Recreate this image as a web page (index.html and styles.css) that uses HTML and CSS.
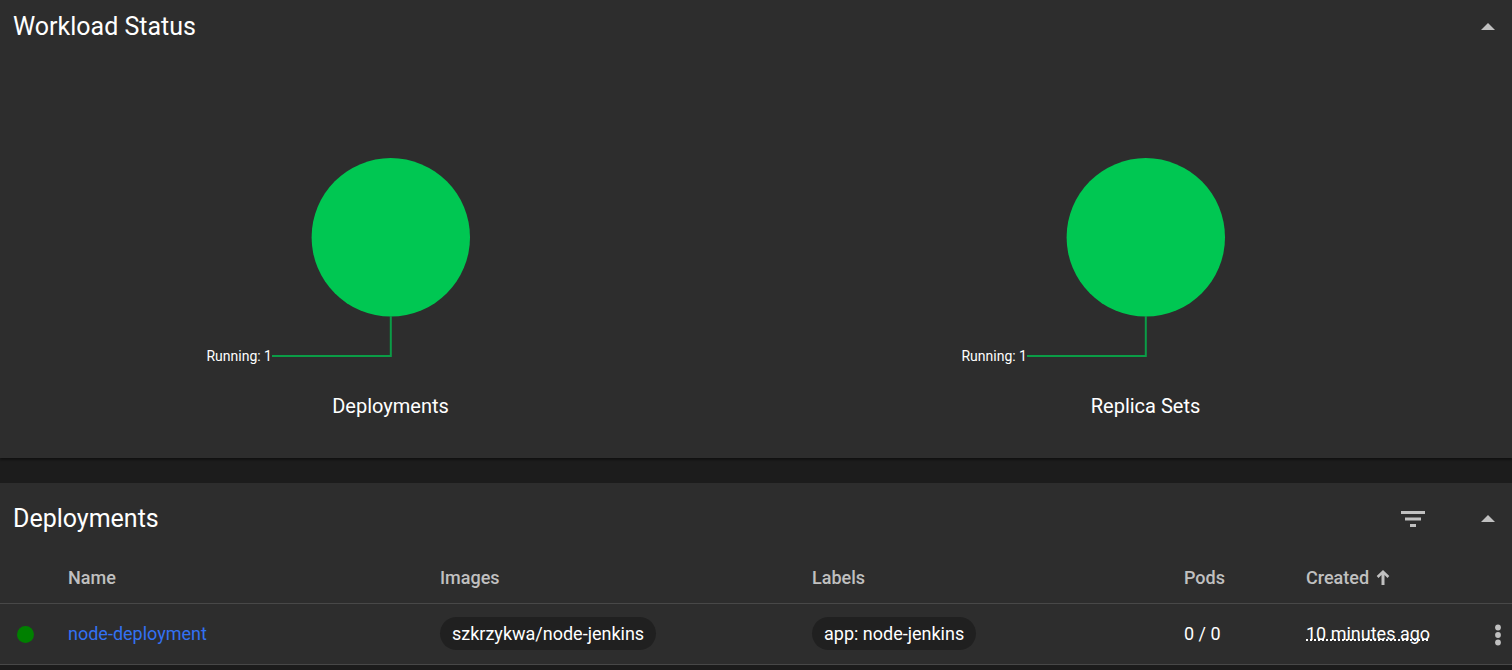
FILE: index.html
```html
<!DOCTYPE html>
<html lang="en">
<head>
<meta charset="utf-8">
<title>Workloads</title>
<link rel="stylesheet" href="styles.css">
</head>
<body>
<main class="page">
  <section class="card">
    <header class="card-header">
      <h2 class="card-title">Workload Status</h2>
      <button class="icon-button" type="button" aria-label="Collapse workload status">
        <svg width="30" height="30" viewBox="0 0 30 30"><path d="M8 18L15 11L22 18z"/></svg>
      </button>
    </header>
    <div class="charts">
      <figure class="chart">
        <svg class="pie" width="381" height="316" viewBox="0 0 381 316">
          <circle class="slice" cx="190.800" cy="183.300" r="79.200"/>
          <path class="leader" d="M190.800 262V302H72"/>
          <text class="pie-label" x="72" y="307" text-anchor="end">Running: 1</text>
        </svg>
        <figcaption class="chart-title">Deployments</figcaption>
      </figure>
      <figure class="chart">
        <svg class="pie" width="381" height="316" viewBox="0 0 381 316">
          <circle class="slice" cx="190.800" cy="183.300" r="79.200"/>
          <path class="leader" d="M190.800 262V302H72"/>
          <text class="pie-label" x="72" y="307" text-anchor="end">Running: 1</text>
        </svg>
        <figcaption class="chart-title">Replica Sets</figcaption>
      </figure>
    </div>
  </section>

  <section class="card">
    <header class="card-header list-header">
      <h2 class="card-title">Deployments</h2>
      <button class="icon-button" type="button" aria-label="Filter">
        <svg width="30" height="30" viewBox="0 0 30 30"><path d="M3 7h24v3H3zM7 13.500h16v3H7zM12 20h6v3h-6z"/></svg>
      </button>
      <button class="icon-button" type="button" aria-label="Collapse deployments">
        <svg width="30" height="30" viewBox="0 0 30 30"><path d="M8 18L15 11L22 18z"/></svg>
      </button>
    </header>
    <table class="table">
      <colgroup>
        <col class="col-status"><col><col><col><col class="col-pods"><col class="col-created"><col class="col-menu">
      </colgroup>
      <thead>
        <tr>
          <th></th>
          <th>Name</th>
          <th>Images</th>
          <th>Labels</th>
          <th>Pods</th>
          <th><button class="sort" type="button">Created
            <svg width="14" height="16" viewBox="0 0 14 16"><path d="M5.500 15V5L2.500 7.900L.7 6.100L7 0L13.300 6.100L11.500 7.900L8.500 5V15z"/></svg></button></th>
          <th></th>
        </tr>
      </thead>
      <tbody>
        <tr>
          <td class="status-cell"><svg class="status" width="18" height="18" viewBox="0 0 18 18" role="img" aria-label="Running"><circle cx="9.500" cy="9.500" r="8.500"/></svg></td>
          <td><a class="link" href="#node-deployment">node-deployment</a></td>
          <td><span class="chip">szkrzykwa/node-jenkins</span></td>
          <td><span class="chip">app: node-jenkins</span></td>
          <td>0 / 0</td>
          <td><span class="time">10 minutes ago</span></td>
          <td><button class="icon-button" type="button" aria-label="Actions">
            <svg width="30" height="30" viewBox="0 0 30 30"><circle cx="16" cy="8.500" r="2.900"/><circle cx="16" cy="16" r="2.900"/><circle cx="16" cy="23.500" r="2.900"/></svg>
          </button></td>
        </tr>
      </tbody>
    </table>
  </section>
</main>
</body>
</html>
```

FILE: styles.css
```css
* {
  box-sizing: border-box;
}

body {
  margin: 0;
  background: #1c1c1c;
  color: #fff;
  font: 18px/24px Roboto, sans-serif;
}

.page {
  display: flex;
  flex-direction: column;
  gap: 25px;
  overflow: hidden;
}

.card {
  background: #2d2d2d;
  box-shadow: 0 2px 2px #0006;
}

.card-header {
  display: flex;
  align-items: center;
  gap: 45px;
  height: 54px;
  padding: 0 9px 0 13px;
}

.list-header {
  height: 71px;
}

.card-title {
  flex: 1;
  margin: 0;
  font-size: 25px;
  font-weight: 400;
  line-height: 32px;
}

.icon-button {
  display: flex;
  padding: 0;
  border: 0;
  background: none;
  cursor: pointer;
}

svg {
  fill: #c0c0c0;
}

.charts {
  display: grid;
  grid-template-columns: 1fr 1fr;
  margin: 0 -11px 0 13px;
  padding-bottom: 40px;
}

.chart {
  display: flex;
  flex-direction: column;
  align-items: center;
  gap: 24px;
  margin: 0;
}

.pie .slice {
  fill: #00c752;
}

.pie .leader {
  fill: none;
  stroke: #0a9c46;
  stroke-width: 2px;
}

.pie .pie-label {
  fill: #fff;
  font-size: 14px;
  font-weight: 400;
}

.chart-title {
  color: #fff;
  font-size: 20px;
  font-weight: 400;
}

.table {
  width: 100%;
  border-collapse: collapse;
  table-layout: fixed;
}

.col-status {
  width: 68px;
}

.col-pods {
  width: 122px;
}

.col-created {
  width: 176px;
}

.col-menu {
  width: 30px;
}

.table th,
.table td {
  padding: 0;
  border-bottom: 1px solid #484848;
  text-align: left;
  white-space: nowrap;
}

.table th {
  height: 49px;
  color: #c0c0c0;
  font-weight: 500;
}

.table td {
  height: 61px;
}

.sort {
  display: flex;
  align-items: center;
  gap: 7px;
  padding: 0;
  border: 0;
  background: none;
  color: inherit;
  font: inherit;
  cursor: pointer;
}

.table .status-cell {
  padding-left: 16px;
}

.status {
  display: block;
  fill: #008000;
}

.link {
  color: #3371f2;
  text-decoration: none;
}

.chip {
  display: inline-block;
  padding: 5px 12px 4px;
  border-radius: 17px;
  background: #202020;
}

.time {
  text-decoration: underline dotted 2px;
  text-decoration-skip-ink: none;
  text-underline-offset: 0;
}
```
